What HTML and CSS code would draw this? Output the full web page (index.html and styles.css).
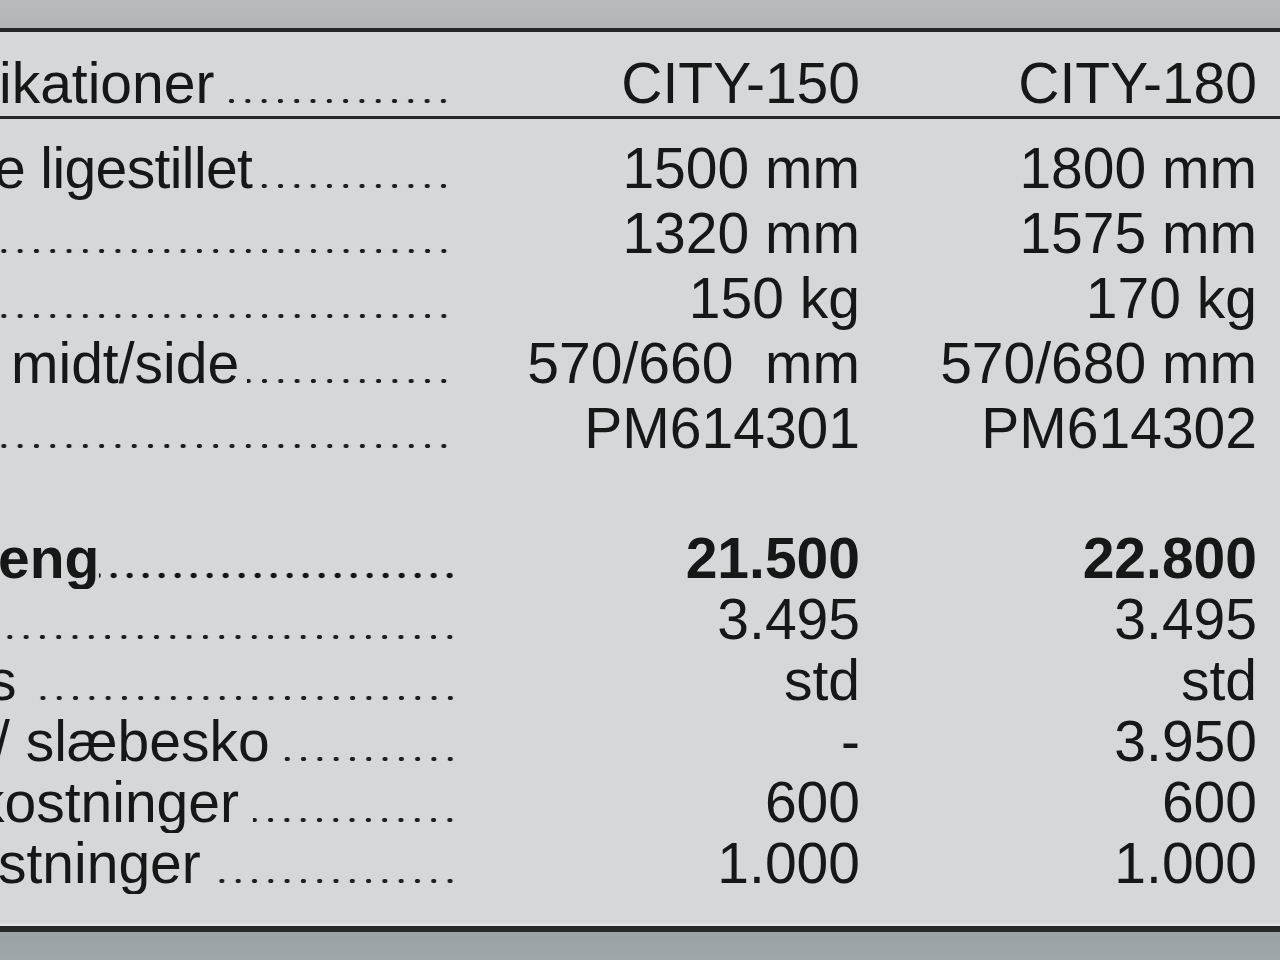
FILE: index.html
```html
<!DOCTYPE html>
<html lang="da">
<head>
<meta charset="utf-8">
<title>Specifikationer CITY-150 / CITY-180</title>
<link rel="stylesheet" href="styles.css">
</head>
<body>
<div class="page">
  <div class="band band-top"></div>
  <section class="sheet">
    <div class="row head">
      <div class="label"><span class="txt cut-a">ikationer</span><span class="leader gap"></span></div>
      <div class="val">CITY-150</div>
      <div class="val">CITY-180</div>
    </div>
    <div class="block block1">
      <div class="row">
        <div class="label"><span class="txt cut-b">e ligestillet</span><span class="leader"></span></div>
        <div class="val">1500 mm</div>
        <div class="val">1800 mm</div>
      </div>
      <div class="row">
        <div class="label"><span class="leader"></span></div>
        <div class="val">1320 mm</div>
        <div class="val">1575 mm</div>
      </div>
      <div class="row">
        <div class="label"><span class="leader"></span></div>
        <div class="val">150 kg</div>
        <div class="val">170 kg</div>
      </div>
      <div class="row">
        <div class="label"><span class="txt indent">midt/side</span><span class="leader gap-s"></span></div>
        <div class="val">570/660  mm</div>
        <div class="val">570/680 mm</div>
      </div>
      <div class="row">
        <div class="label"><span class="leader"></span></div>
        <div class="val">PM614301</div>
        <div class="val">PM614302</div>
      </div>
    </div>
    <div class="block block2">
      <div class="row strong">
        <div class="label"><span class="txt cut-c">eng</span><span class="leader"></span></div>
        <div class="val">21.500</div>
        <div class="val">22.800</div>
      </div>
      <div class="row">
        <div class="label"><span class="leader"></span></div>
        <div class="val">3.495</div>
        <div class="val">3.495</div>
      </div>
      <div class="row">
        <div class="label"><span class="txt cut-d">s</span><span class="leader gap"></span></div>
        <div class="val">std</div>
        <div class="val">std</div>
      </div>
      <div class="row">
        <div class="label"><span class="txt cut-e">/ slæbesko</span><span class="leader gap"></span></div>
        <div class="val">-</div>
        <div class="val">3.950</div>
      </div>
      <div class="row">
        <div class="label"><span class="txt cut-f">kostninger</span><span class="leader gap"></span></div>
        <div class="val">600</div>
        <div class="val">600</div>
      </div>
      <div class="row">
        <div class="label"><span class="txt cut-g">stninger</span><span class="leader gap"></span></div>
        <div class="val">1.000</div>
        <div class="val">1.000</div>
      </div>
    </div>
  </section>
  <div class="band band-bottom"></div>
</div>
</body>
</html>
```

FILE: styles.css
```css
html, body {
  margin: 0;
  padding: 0;
}

body {
  width: 1280px;
  height: 960px;
  overflow: hidden;
  background: #d5d7d9;
  font-family: "Liberation Sans", Arial, Helvetica, sans-serif;
  font-size: 57px;
  color: #161717;
}

.page {
  display: flex;
  flex-direction: column;
  height: 960px;
  overflow: hidden;
}

.band {
  flex: none;
}

.band-top {
  height: 28px;
  background: linear-gradient(#b8bcbf, #b1b5b8);
}

.band-bottom {
  height: 28px;
  background: linear-gradient(#9aa2a6, #a0a7ab);
}

.sheet {
  flex: none;
  background: #d5d7d9;
  border-top: 4px solid #262728;
  border-bottom: 6px solid #262728;
  box-shadow: inset 0 -2px 0 #e3e5e6;
  padding-bottom: 32px;
  overflow: hidden;
}

.row {
  display: grid;
  grid-template-columns: 460px 400px 397px;
  line-height: 65px;
  height: 65px;
  white-space: pre;
}

.head {
  padding-top: 18px;
  line-height: 66px;
  height: 66px;
  border-bottom: 3px solid #262728;
}

.block1 {
  padding-top: 17px;
}

.block2 {
  padding-top: 67px;
}

.block2 .row {
  line-height: 61px;
  height: 61px;
}

.label {
  display: flex;
  align-items: stretch;
  min-width: 0;
  overflow: hidden;
  padding-right: 8px;
}

.block2 .label {
  padding-right: 2px;
}

.txt {
  flex: none;
}

.leader {
  flex: 1 1 auto;
  min-width: 0;
  background-image: radial-gradient(ellipse 3px 2.5px at center, #1e1f20 0, #1e1f20 72%, rgba(30, 31, 32, 0) 100%);
  background-size: 16.3px 6px;
  background-repeat: repeat-x;
  background-position: right 0 top 47px;
}

.head .leader {
  background-position: right 0 top 48px;
}

.block2 .leader {
  background-position: right 0 top 45px;
}

.strong {
  font-weight: 700;
}

.strong .leader {
  background-image: radial-gradient(ellipse 3.5px 3.1px at center, #141516 0, #141516 75%, rgba(20, 21, 22, 0) 100%);
  background-size: 16px 7px;
  background-position: right 0 top 44px;
}

.gap {
  margin-left: 14px;
}

.gap-s {
  margin-left: 8px;
}

.val {
  text-align: right;
}

.cut-a { margin-left: -1px; }
.cut-b { margin-left: -6px; letter-spacing: -0.6px; }
.cut-c { margin-left: -2px; }
.cut-d { margin-left: -12px; }
.cut-e { margin-left: -6px; }
.cut-f { margin-left: -24px; }
.cut-g { margin-left: -2px; }
.indent { margin-left: 11px; }
```
